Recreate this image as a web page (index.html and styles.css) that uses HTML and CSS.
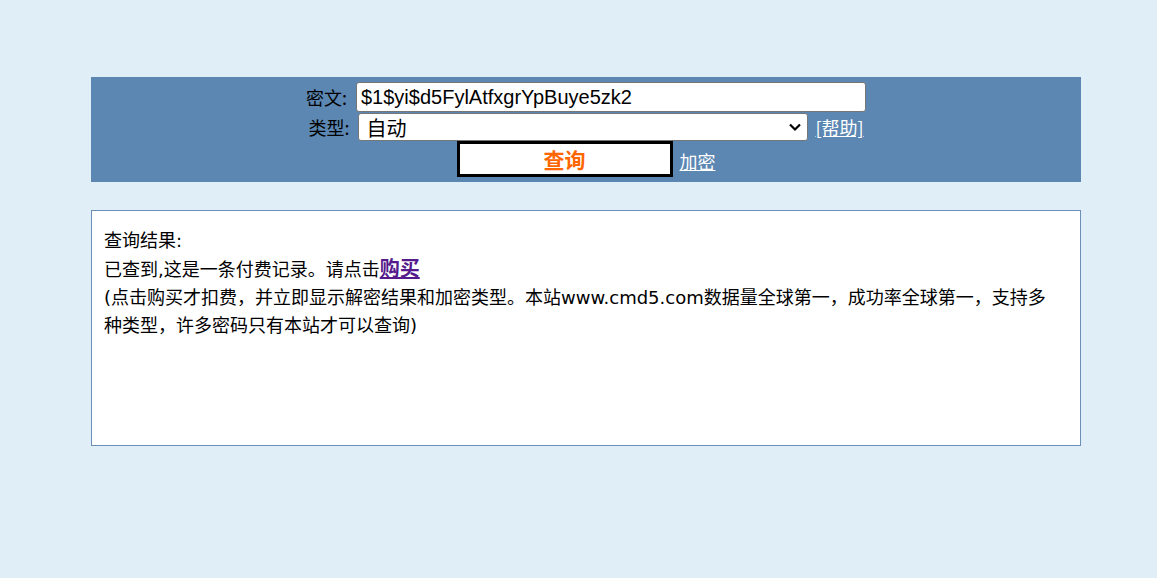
FILE: index.html
```html
<!DOCTYPE html>
<html lang="zh-CN">
<head>
<meta charset="utf-8">
<title>cmd5</title>
<link rel="stylesheet" href="styles.css">
</head>
<body>
<div class="page">
  <form class="panel">
    <div class="row row-cipher">
      <span class="label">密文:</span>
      <input class="cipher" type="text" value="$1$yi$d5FylAtfxgrYpBuye5zk2">
    </div>
    <div class="row row-type">
      <span class="label">类型:</span>
      <div class="select">
        <span>自动</span>
        <svg class="chev" width="14" height="10" viewBox="0 0 14 10"><path d="M2 2.5 L7 7.5 L12 2.5" fill="none" stroke="#000" stroke-width="2.2"/></svg>
      </div>
      <a class="link help" href="#">[帮助]</a>
    </div>
    <div class="row row-actions">
      <button class="query" type="button">查询</button>
      <a class="link enc" href="#">加密</a>
    </div>
  </form>
  <div class="result">
    <div>查询结果:</div>
    <div>已查到,这是一条付费记录。请点击<a class="buy" href="#">购买</a></div>
    <div>(点击购买才扣费，并立即显示解密结果和加密类型。本站www.cmd5.com数据量全球第一，成功率全球第一，支持多种类型，许多密码只有本站才可以查询)</div>
  </div>
</div>
</body>
</html>
```
FILE: styles.css
```css
html, body {
  margin: 0;
  padding: 0;
  background: #e0eef7;
}
body {
  font-family: "DejaVu Sans", "Noto Sans CJK SC", sans-serif;
  font-size: 18px;
  color: #000;
}
.page {
  width: 990px;
  margin: 77px 0 0 91px;
}
.panel {
  background: #5b87b2;
  padding: 5px 0 5px;
  display: flex;
  flex-direction: column;
  align-items: center;
}
.row {
  display: flex;
  align-items: center;
}
.row-cipher { height: 30px; margin-bottom: 1px; }
.row-type { height: 28px; }
.row-actions { height: 36px; }
.label {
  font-family: "Noto Sans CJK SC", sans-serif;
  font-size: 18px;
  line-height: 20px;
  margin-right: 9px;
}
.cipher {
  width: 510px;
  height: 30px;
  box-sizing: border-box;
  border: 1px solid #767676;
  border-radius: 3px;
  padding: 0 4px;
  font-family: "Liberation Sans", Arial, sans-serif;
  font-size: 20px;
  color: #000;
  background: #fff;
}
.select {
  width: 450px;
  height: 28px;
  box-sizing: border-box;
  border: 1px solid #767676;
  border-radius: 3px;
  background: #fff;
  display: flex;
  align-items: center;
  justify-content: space-between;
  padding: 0 5px 0 7px;
  font-family: "Noto Sans CJK SC", sans-serif;
  font-size: 20px;
}
.chev { display: block; }
.link {
  color: #fff;
  text-decoration: underline;
  font-family: "Noto Sans CJK SC", sans-serif;
  font-size: 18px;
}
.help { margin-left: 7px; }
.query {
  width: 216px;
  height: 36px;
  box-sizing: border-box;
  border: 3px solid #000;
  background: #fff;
  color: #ff6600;
  font-family: "Noto Sans CJK SC", sans-serif;
  font-size: 21px;
  font-weight: bold;
  padding: 0;
}
.enc { margin-left: 7px; margin-top: 4px; }
.result {
  margin-top: 28px;
  background: #fff;
  border: 1px solid #6b8fb9;
  height: 236px;
  box-sizing: border-box;
  padding: 16px 26px 16px 12px;
  font-size: 18px;
  line-height: 28px;
}
.buy {
  color: #551a8b;
  font-weight: bold;
  font-size: 20px;
}
```
